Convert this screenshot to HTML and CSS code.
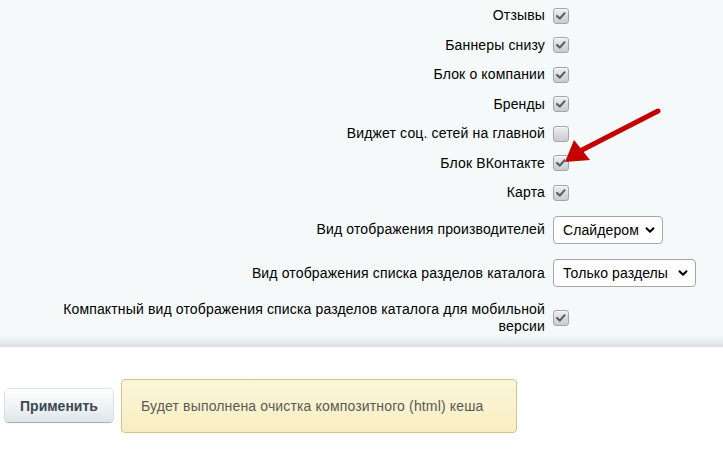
FILE: index.html
```html
<!DOCTYPE html>
<html lang="ru">
<head>
<meta charset="utf-8">
<link rel="stylesheet" href="styles.css">
</head>
<body>
<div class="page">
  <div class="panel">
    <div class="row cb-row"><div class="label">Отзывы</div><div class="ctrl"><span class="cb checked"><svg viewBox="0 0 16 16"><path d="M4 8 L6.8 10.6 L11.6 5.2" /></svg></span></div></div>
    <div class="row cb-row"><div class="label">Баннеры снизу</div><div class="ctrl"><span class="cb checked"><svg viewBox="0 0 16 16"><path d="M4 8 L6.8 10.6 L11.6 5.2" /></svg></span></div></div>
    <div class="row cb-row"><div class="label">Блок о компании</div><div class="ctrl"><span class="cb checked"><svg viewBox="0 0 16 16"><path d="M4 8 L6.8 10.6 L11.6 5.2" /></svg></span></div></div>
    <div class="row cb-row"><div class="label">Бренды</div><div class="ctrl"><span class="cb checked"><svg viewBox="0 0 16 16"><path d="M4 8 L6.8 10.6 L11.6 5.2" /></svg></span></div></div>
    <div class="row cb-row"><div class="label">Виджет соц. сетей на главной</div><div class="ctrl"><span class="cb"></span></div></div>
    <div class="row cb-row"><div class="label">Блок ВКонтакте</div><div class="ctrl"><span class="cb checked"><svg viewBox="0 0 16 16"><path d="M4 8 L6.8 10.6 L11.6 5.2" /></svg></span></div></div>
    <div class="row cb-row"><div class="label">Карта</div><div class="ctrl"><span class="cb checked"><svg viewBox="0 0 16 16"><path d="M4 8 L6.8 10.6 L11.6 5.2" /></svg></span></div></div>
    <div class="row sel-row1"><div class="label">Вид отображения производителей</div><div class="ctrl"><span class="select sel-a"><span class="sel-text">Слайдером</span><svg class="chev" viewBox="0 0 10 10"><path d="M1.5 3.2 L5 6.7 L8.5 3.2" /></svg></span></div></div>
    <div class="row sel-row2"><div class="label">Вид отображения списка разделов каталога</div><div class="ctrl"><span class="select sel-b"><span class="sel-text">Только разделы</span><svg class="chev" viewBox="0 0 10 10"><path d="M1.5 3.2 L5 6.7 L8.5 3.2" /></svg></span></div></div>
    <div class="row compact-row"><div class="label"><span class="wrap">Компактный вид отображения списка разделов каталога для мобильной версии</span></div><div class="ctrl"><span class="cb checked"><svg viewBox="0 0 16 16"><path d="M4 8 L6.8 10.6 L11.6 5.2" /></svg></span></div></div>
  </div>
  <div class="footer">
    <span class="btn">Применить</span>
    <div class="notice">Будет выполнена очистка композитного (html) кеша</div>
  </div>
  <svg class="arrow" viewBox="0 0 723 452" width="723" height="452">
    <line x1="658" y1="111" x2="582" y2="150" stroke="#c40000" stroke-width="5" stroke-linecap="round"/>
    <polygon points="565,162 574,140 590,160" fill="#c40000"/>
  </svg>
</div>
</body>
</html>
```

FILE: styles.css
```css
html, body {
  margin: 0;
  padding: 0;
  background: #ffffff;
}
body {
  font-family: Arial, "Liberation Sans", sans-serif;
  font-size: 14px;
  letter-spacing: 0.15px;
  color: #000;
}
.page {
  position: relative;
  width: 723px;
  height: 452px;
  overflow: hidden;
}
.panel {
  background: linear-gradient(to bottom, #f5f9f9 0, #f5f9f9 calc(100% - 12px), #e9eeef calc(100% - 6px), #d9e0e2 100%);
  padding-top: 1px;
  padding-bottom: 6px;
}
.row {
  display: grid;
  grid-template-columns: 545px auto;
  align-items: center;
}
.cb-row { height: 29.5px; }
.sel-row1 { height: 44px; }
.sel-row2 { height: 43px; }
.compact-row { height: 46px; }
.label {
  text-align: right;
  line-height: 17px;
}
.wrap {
  display: inline-block;
  max-width: 500px;
}
.ctrl {
  padding-left: 8px;
  display: flex;
  align-items: center;
}
.cb {
  box-sizing: border-box;
  width: 16px;
  height: 16px;
  border: 1px solid #a3a6a8;
  border-radius: 3px;
  background: linear-gradient(to bottom, #eef0f1 0%, #d9dcde 50%, #c8cccf 100%);
  box-shadow: inset 0 1px 0 rgba(255,255,255,0.7);
  display: flex;
  align-items: center;
  justify-content: center;
}
.cb svg {
  width: 16px;
  height: 16px;
  flex: none;
}
.cb svg path {
  fill: none;
  stroke: #56595b;
  stroke-width: 2;
  stroke-linecap: round;
  stroke-linejoin: round;
}
.select {
  box-sizing: border-box;
  height: 28px;
  border: 1px solid #a7a7a7;
  border-radius: 4px;
  background: #fff;
  display: flex;
  align-items: center;
  justify-content: space-between;
  padding: 0 7px 0 9px;
  font-size: 14px;
  letter-spacing: 0.1px;
}
.sel-a { width: 110px; }
.sel-b { width: 143px; }
.chev {
  width: 10px;
  height: 10px;
}
.chev path {
  fill: none;
  stroke: #000;
  stroke-width: 2;
  stroke-linecap: round;
  stroke-linejoin: round;
}
.footer {
  display: flex;
  align-items: center;
  gap: 8px;
  padding: 32px 0 0 5px;
}
.btn {
  box-sizing: border-box;
  width: 108px;
  height: 33px;
  border-radius: 4px;
  background: linear-gradient(to bottom, #ffffff 0%, #f1f5f6 45%, #dfe6e9 100%);
  box-shadow: 0 1px 1px rgba(0,0,0,0.25), 0 0 0 1px rgba(160,175,180,0.35);
  display: flex;
  align-items: center;
  justify-content: center;
  font-weight: bold;
  color: #3b4850;
  font-size: 14px;
  letter-spacing: 0;
}
.notice {
  box-sizing: border-box;
  width: 396px;
  height: 54px;
  border: 1px solid #d4c58c;
  border-radius: 4px;
  background: linear-gradient(to bottom, #fcf6d8 0%, #f8eec3 100%);
  display: flex;
  align-items: center;
  padding-left: 19px;
  color: #595959;
  font-size: 14px;
}
.arrow {
  position: absolute;
  left: 0;
  top: 0;
  pointer-events: none;
}
```
